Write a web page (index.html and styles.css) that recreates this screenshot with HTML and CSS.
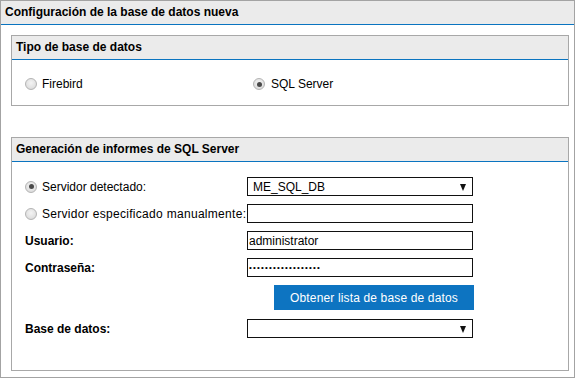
FILE: index.html
```html
<!DOCTYPE html>
<html>
<head>
<meta charset="utf-8">
<link rel="stylesheet" href="styles.css">
</head>
<body>
<div class="panel">
  <div class="panel-head">Configuración de la base de datos nueva</div>
  <div class="panel-body">
    <div class="box">
      <div class="box-head">Tipo de base de datos</div>
      <div class="box-body type-row">
        <label class="radio-label"><span class="radio"></span>Firebird</label>
        <label class="radio-label"><span class="radio checked"></span>SQL Server</label>
      </div>
    </div>
    <div class="box box-sql">
      <div class="box-head">Generación de informes de SQL Server</div>
      <div class="box-body form-grid">
        <label class="radio-label"><span class="radio checked"></span>Servidor detectado:</label>
        <div class="select"><span class="select-text">ME_SQL_DB</span><span class="arrow"></span></div>

        <label class="radio-label wide"><span class="radio"></span>Servidor especificado manualmente:</label>
        <div class="field"></div>

        <label class="bold-label">Usuario:</label>
        <div class="field"><span class="field-text">administrator</span></div>

        <label class="bold-label">Contraseña:</label>
        <div class="field"><span class="dots">••••••••••••••••••</span></div>

        <div></div>
        <div class="btn-cell"><button class="btn">Obtener lista de base de datos</button></div>

        <label class="bold-label">Base de datos:</label>
        <div class="select"><span class="select-text"></span><span class="arrow"></span></div>
      </div>
    </div>
  </div>
</div>
</body>
</html>
```

FILE: styles.css
```css
* { box-sizing: border-box; }
html, body { margin: 0; padding: 0; background: #fff; }
body {
  font-family: "Liberation Sans", Arial, sans-serif;
  font-size: 12px;
  color: #000;
}
.panel {
  width: 575px;
  height: 378px;
  border: 1px solid #a3a3a3;
}
.panel-head {
  height: 24px;
  background: #ebebeb;
  border-bottom: 1px solid #0a74c0;
  font-weight: bold;
  padding: 4px 0 0 4px;
  line-height: 14px;
}
.panel-body {
  padding: 10px 5px 0 10px;
}
.box {
  border: 1px solid #a8a8a8;
  width: 558px;
}
.box-head {
  height: 24px;
  background: #ebebeb;
  border-bottom: 1px solid #0a74c0;
  font-weight: bold;
  padding: 4px 0 0 4px;
  line-height: 14px;
}
.type-row {
  display: grid;
  grid-template-columns: 228px 1fr;
  padding: 17px 0 0 13px;
  height: 45px;
}
.box-sql {
  margin-top: 31px;
  height: 234px;
}
.radio-label {
  display: flex;
  align-items: center;
  height: 12px;
  line-height: 12px;
}
.wide { letter-spacing: 0.3px; white-space: nowrap; }
.radio {
  width: 12px;
  height: 12px;
  border-radius: 50%;
  border: 1px solid #b4b4b4;
  background: radial-gradient(circle at 50% 40%, #f4f4f4 0%, #e2e2e2 60%, #cfcfcf 100%);
  margin-right: 5px;
  position: relative;
  flex: none;
}
.radio.checked::after {
  content: "";
  position: absolute;
  left: 2.5px;
  top: 2.5px;
  width: 5px;
  height: 5px;
  border-radius: 50%;
  background: #4a4a4a;
}
.type-row .radio-label { margin-top: 1px; }
.type-row .radio-label:nth-child(2) .radio { margin-right: 6px; }
.form-grid {
  display: grid;
  grid-template-columns: 222px 226px;
  grid-template-rows: 19px 19px 19px 19px 26px 20px;
  row-gap: 8px;
  padding: 15px 0 0 13px;
}
.form-grid > .radio-label { align-self: center; height: 13px; }
.bold-label {
  font-weight: bold;
  align-self: center;
}
.field, .select {
  border: 1px solid #111;
  height: 19px;
  display: flex;
  align-items: center;
  position: relative;
}
.field-text {
  padding-left: 1px;
  font-size: 12px;
}
.select-text {
  padding-left: 5px;
}
.dots {
  font-size: 8px;
  letter-spacing: 1.2px;
  padding-left: 1px;
  line-height: 8px;
}
.arrow {
  position: absolute;
  right: 6px;
  top: 6px;
  width: 0;
  height: 0;
  border-left: 3.5px solid transparent;
  border-right: 3.5px solid transparent;
  border-top: 7px solid #111;
}
.btn-cell {
  display: flex;
  justify-content: flex-end;
  margin-right: -1px;
}
.btn {
  width: 200px;
  height: 25px;
  border: none;
  background: #0d74c1;
  color: #fff;
  font-family: "Liberation Sans", Arial, sans-serif;
  font-size: 12px;
  letter-spacing: 0.15px;
  padding: 0;
}
```
